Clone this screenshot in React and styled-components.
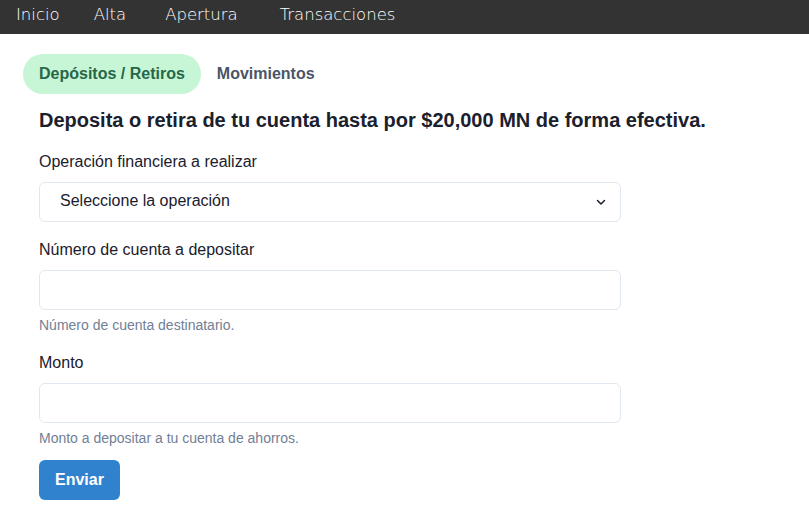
import React, { useState } from "react";
import styled, { createGlobalStyle } from "styled-components";

const GlobalStyle = createGlobalStyle`
  body {
    margin: 0;
    background: #ffffff;
    font-family: "Liberation Sans", Arial, sans-serif;
    color: #1a202c;
  }
  * { box-sizing: border-box; }
`;

const NavBar = styled.nav`
  height: 34px;
  background: #333333;
  display: flex;
  align-items: center;
  padding: 0 0 6px 16px;
`;

const NavLink = styled.a`
  font-family: "DejaVu Sans", sans-serif;
  font-weight: 200;
  font-size: 16.5px;
  color: #ffffff;
  text-decoration: none;
  cursor: pointer;
  margin-right: ${(p) => p.space || 0}px;
`;

const Main = styled.main`
  padding: 20px 23px;
`;

const TabList = styled.div`
  display: flex;
`;

const Tab = styled.button`
  border: none;
  background: ${(p) => (p.selected ? "#c6f6d5" : "transparent")};
  color: ${(p) => (p.selected ? "#276749" : "#4a5568")};
  border-radius: 999px;
  height: 40px;
  padding: 0 16px;
  font-family: "Liberation Sans", Arial, sans-serif;
  font-size: 16px;
  font-weight: 700;
  cursor: pointer;
`;

const Panel = styled.section`
  padding: 16px;
`;

const Heading = styled.h2`
  margin: 0 0 20px;
  font-size: 20px;
  line-height: 20px;
  font-weight: 700;
  white-space: nowrap;
  color: #1a202c;
`;

const Form = styled.form`
  display: flex;
  flex-direction: column;
  max-width: 582px;
`;

const Field = styled.div`
  display: flex;
  flex-direction: column;
  margin-bottom: ${(p) => p.gap || 16}px;
`;

const Label = styled.label`
  font-size: 16px;
  line-height: 24px;
  margin-bottom: 8px;
  color: #1a202c;
`;

const SelectWrap = styled.div`
  position: relative;
  height: 40px;
`;

const Select = styled.select`
  appearance: none;
  width: 100%;
  height: 40px;
  border: 1px solid #e2e8f0;
  border-radius: 6px;
  background: #fff;
  padding: 0 32px 4px 20px;
  font-family: "Liberation Sans", Arial, sans-serif;
  font-size: 16px;
  color: #1a202c;
  outline: none;
`;

const Chevron = styled.svg`
  position: absolute;
  right: 14px;
  top: 14px;
  pointer-events: none;
`;

const Input = styled.input`
  width: 100%;
  height: 40px;
  border: 1px solid #e2e8f0;
  border-radius: 6px;
  padding: 0 16px;
  font-family: "Liberation Sans", Arial, sans-serif;
  font-size: 16px;
  outline: none;
`;

const Helper = styled.div`
  margin-top: 6px;
  font-size: 14px;
  line-height: 18px;
  color: #718096;
`;

const Button = styled.button`
  align-self: flex-start;
  height: 40px;
  padding: 0 16px;
  border: none;
  border-radius: 6px;
  background: #3182ce;
  color: #ffffff;
  font-family: "Liberation Sans", Arial, sans-serif;
  font-size: 16px;
  font-weight: 700;
  cursor: pointer;
`;

export default function App() {
  const [tab, setTab] = useState(0);
  return (
    <>
      <GlobalStyle />
      <NavBar>
        <NavLink space={34}>Inicio</NavLink>
        <NavLink space={39}>Alta</NavLink>
        <NavLink space={42}>Apertura</NavLink>
        <NavLink>Transacciones</NavLink>
      </NavBar>
      <Main>
        <TabList>
          <Tab selected={tab === 0} onClick={() => setTab(0)}>
            Depósitos / Retiros
          </Tab>
          <Tab selected={tab === 1} onClick={() => setTab(1)}>
            Movimientos
          </Tab>
        </TabList>
        <Panel>
          <Heading>
            Deposita o retira de tu cuenta hasta por $20,000 MN de forma efectiva.
          </Heading>
          <Form onSubmit={(e) => e.preventDefault()}>
            <Field gap={16}>
              <Label>Operación financiera a realizar</Label>
              <SelectWrap>
                <Select defaultValue="">
                  <option value="">Seleccione la operación</option>
                  <option value="deposito">Depósito</option>
                  <option value="retiro">Retiro</option>
                </Select>
                <Chevron width="12" height="12" viewBox="0 0 24 24">
                  <path
                    d="M5 9l7 7 7-7"
                    fill="none"
                    stroke="#1a202c"
                    strokeWidth="3"
                    strokeLinecap="round"
                    strokeLinejoin="round"
                  />
                </Chevron>
              </SelectWrap>
            </Field>
            <Field gap={17}>
              <Label>Número de cuenta a depositar</Label>
              <Input type="text" />
              <Helper>Número de cuenta destinatario.</Helper>
            </Field>
            <Field gap={13}>
              <Label>Monto</Label>
              <Input type="text" />
              <Helper>Monto a depositar a tu cuenta de ahorros.</Helper>
            </Field>
            <Button type="submit">Enviar</Button>
          </Form>
        </Panel>
      </Main>
    </>
  );
}
